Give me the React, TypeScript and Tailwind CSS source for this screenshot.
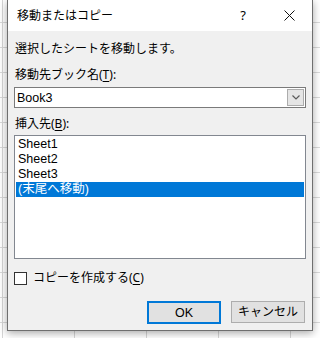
const sheets = ["Sheet1", "Sheet2", "Sheet3", "(末尾へ移動)"];

const font = "font-['Noto_Sans','Noto_Sans_CJK_JP',sans-serif]";
const listFont = "font-['Liberation_Sans','Noto_Sans_CJK_JP',sans-serif]";

export default function App() {
  return (
    <div
      className={`h-[338px] w-[320px] overflow-hidden bg-white bg-[linear-gradient(to_right,#d6d6d6_1px,transparent_1px),linear-gradient(to_bottom,#dadada_1px,transparent_1px)] bg-[length:72px_25px] bg-[position:2px_22px] text-black ${font}`}
    >
      <div className="ml-[7px] flex h-[331px] w-[306px] flex-col border-x border-b border-[#6f6f6f] bg-[#f0f0f0] shadow-[0_2px_8px_rgba(0,0,0,0.35)]">
        <div className="flex h-[31px] shrink-0 items-center bg-white pl-[9px] text-[12px] leading-none">
          <span className="flex-1">移動またはコピー</span>
          <span className="mr-[38px] text-[13px]">?</span>
          <svg className="mr-[17px]" width="11" height="11" viewBox="0 0 11 11">
            <path d="M0.5 0.5 L10.5 10.5 M10.5 0.5 L0.5 10.5" stroke="#111" strokeWidth="1" />
          </svg>
        </div>

        <div className="flex flex-col px-[6px] text-[12px] leading-[16px]">
          <p className="mt-[10px] pl-[1px]">選択したシートを移動します。</p>

          <p className="mt-[10px] pl-[1px]">
            移動先ブック名(<span className="underline underline-offset-2">T</span>):
          </p>

          <div className="mt-[4px] flex h-[21px] items-stretch border border-[#7a7a7a] bg-white">
            <span className={`flex flex-1 items-center pl-[2px] text-[12.5px] ${listFont}`}>Book3</span>
            <div className="m-px flex w-[17px] items-center justify-center border border-[#acacac] bg-[#e5e5e5]">
              <svg width="8" height="5" viewBox="0 0 8 5">
                <path d="M0.5 0.5 L4 4 L7.5 0.5" fill="none" stroke="#5a5a5a" strokeWidth="1.2" />
              </svg>
            </div>
          </div>

          <p className="mt-[8px] pl-[1px]">
            挿入先(<span className="underline underline-offset-2">B</span>):
          </p>

          <div className="mt-[3px] flex h-[124px] flex-col border border-[#828790] bg-white p-px">
            {sheets.map((name, i) => (
              <div
                key={name}
                className={`flex h-[15px] items-center pl-[2px] text-[12.5px] leading-[15px] ${listFont} ${
                  i === sheets.length - 1 ? "bg-[#0078d7] text-white" : ""
                }`}
              >
                {name}
              </div>
            ))}
          </div>

          <label className="mt-[11px] flex items-center gap-[6px]">
            <span className="h-[13px] w-[13px] border border-[#333] bg-white" />
            <span>
              コピーを作成する(<span className="underline underline-offset-2">C</span>)
            </span>
          </label>

          <div className="mt-[15px] flex justify-end gap-[10px] pr-[1px]">
            <button className={`flex h-[23px] w-[74px] items-center justify-center border-2 border-[#0078d7] bg-[#e1e1e1] text-[12.5px] ${listFont}`}>
              OK
            </button>
            <button className="flex h-[22px] w-[74px] items-center justify-center border border-[#adadad] bg-[#e1e1e1]">
              キャンセル
            </button>
          </div>
        </div>
      </div>
    </div>
  );
}
